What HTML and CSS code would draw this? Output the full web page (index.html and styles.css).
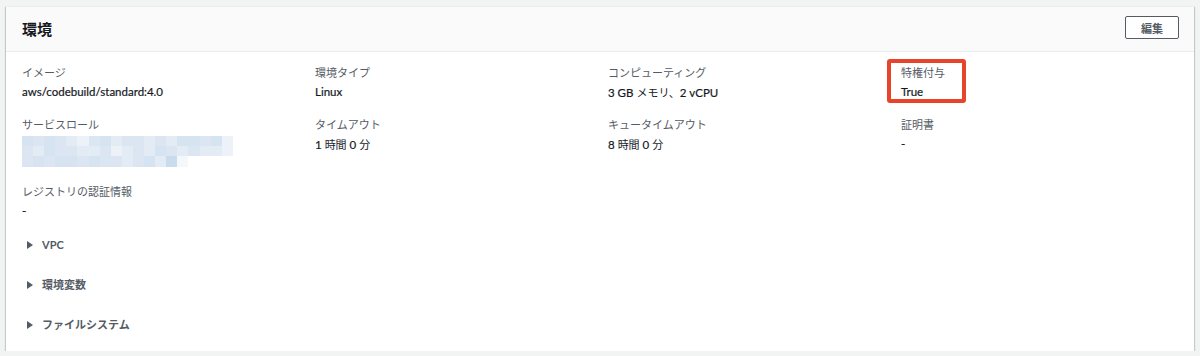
FILE: index.html
```html
<!DOCTYPE html>
<html lang="ja">
<head>
<meta charset="utf-8">
<link rel="stylesheet" href="styles.css">
</head>
<body>
<div class="card">
  <div class="card-header">
    <h2 class="title">環境</h2>
    <button class="btn">編集</button>
  </div>
  <div class="card-body">
    <div class="grid">
      <div class="item"><div class="label">イメージ</div><div class="value">aws/codebuild/standard:4.0</div></div>
      <div class="item"><div class="label">環境タイプ</div><div class="value">Linux</div></div>
      <div class="item"><div class="label">コンピューティング</div><div class="value">3 GB <span class="ja">メモリ、</span>2 vCPU</div></div>
      <div class="item"><div class="label">特権付与</div><div class="value">True</div><div class="highlight"></div></div>

      <div class="item"><div class="label">サービスロール</div>
        <div class="mosaic">
          <div class="mrow"><span class="a"></span><span class="b"></span><span class="a"></span><span class="b"></span><span class="c"></span><span class="d"></span><span class="b"></span><span class="a"></span><span class="c"></span><span class="b"></span><span class="b"></span><span class="c"></span><span class="b"></span><span class="c"></span><span class="a"></span><span class="a"></span><span class="b"></span><span class="a"></span><span class="d"></span></div>
          <div class="mrow"><span class="b"></span><span class="c"></span><span class="a"></span><span class="b"></span><span class="b"></span><span class="c"></span><span class="c"></span><span class="b"></span><span class="d"></span><span class="c"></span><span class="b"></span><span class="c"></span><span class="a"></span><span class="b"></span><span class="c"></span><span class="b"></span><span class="c"></span><span class="c"></span><span class="d"></span></div>
          <div class="mrow tall"><span class="b"></span><span class="a"></span><span class="b"></span><span class="a"></span><span class="a"></span><span class="b"></span><span class="a"></span><span class="b"></span><span class="b"></span><span class="c"></span><span class="b"></span><span class="a"></span><span class="c"></span><span class="x"></span><span class="e"></span></div>
        </div>
      </div>
      <div class="item"><div class="label">タイムアウト</div><div class="value">1 <span class="ja">時間</span> 0 <span class="ja">分</span></div></div>
      <div class="item"><div class="label">キュータイムアウト</div><div class="value">8 <span class="ja">時間</span> 0 <span class="ja">分</span></div></div>
      <div class="item"><div class="label">証明書</div><div class="value">-</div></div>

      <div class="item"><div class="label">レジストリの認証情報</div><div class="value">-</div></div>
    </div>
    <div class="expanders">
      <div class="expander"><span class="caret"></span><span class="exp-label">VPC</span></div>
      <div class="expander"><span class="caret"></span><span class="exp-label">環境変数</span></div>
      <div class="expander"><span class="caret"></span><span class="exp-label">ファイルシステム</span></div>
    </div>
  </div>
</div>
</body>
</html>
```

FILE: styles.css
```css
* { box-sizing: border-box; }
html, body { margin: 0; padding: 0; }
body {
  background: #f2f3f3;
  font-family: Lato, "Noto Sans CJK JP", sans-serif;
  font-size: 12px;
  color: #16191f;
  padding: 6px 6px 0 6px;
}
.card {
  background: #fff;
  height: 345px;
  box-shadow: 0 1px 1px 0 rgba(0,28,36,.3), 1px 1px 1px 0 rgba(0,28,36,.15), -1px 1px 1px 0 rgba(0,28,36,.15);
  border-top: 1px solid #eaeded;
}
.card-header {
  height: 45px;
  background: #fafafa;
  border-bottom: 1px solid #eaeded;
  display: flex;
  align-items: center;
  justify-content: space-between;
  padding: 0 15px 0 16px;
}
.title {
  margin: 0;
  font-family: "Noto Sans CJK JP", sans-serif;
  font-size: 15px;
  font-weight: 700;
  color: #16191f;
  line-height: 20px;
}
.btn {
  width: 54px;
  height: 23px;
  margin-top: -3px;
  border: 1px solid #545b64;
  border-radius: 2px;
  background: #fff;
  color: #545b64;
  font-family: "Noto Sans CJK JP", sans-serif;
  font-weight: 700;
  font-size: 11px;
  padding: 0;
}
.card-body {
  padding: 12px 16px 0 16px;
}
.grid {
  display: grid;
  grid-template-columns: repeat(4, 293px);
  row-gap: 16px;
}
.item { position: relative; }
.label {
  font-family: "Noto Sans CJK JP", sans-serif;
  font-size: 11px;
  color: #545b64;
  line-height: 16px;
  height: 16px;
}
.value {
  margin-top: 4px;
  line-height: 16px;
  height: 16px;
  font-size: 11.5px;
  color: #16191f;
  -webkit-text-stroke: 0.2px #16191f;
}
.ja {
  font-family: "Noto Sans CJK JP", sans-serif;
  font-size: 11px;
  -webkit-text-stroke: 0;
}
.highlight {
  position: absolute;
  left: -14px;
  top: -5px;
  width: 79px;
  height: 44px;
  border: 4px solid #e8432b;
  border-radius: 3px;
}
.mosaic {
  margin-top: 4px;
  width: 211px;
}
.mrow { display: flex; height: 10px; }
.mrow.tall { height: 11px; }
.mrow span { width: 11.1px; height: 100%; flex: none; }
.mrow .a { background: #d6e4f1; }
.mrow .b { background: #dbe6f2; }
.mrow .c { background: #e3ebf5; }
.mrow .d { background: #edf2f8; }
.mrow .e { background: #f5f8fb; }
.mrow .x { background: #c9dcee; }
.expanders { margin-top: 6px; }
.expander {
  height: 40px;
  display: flex;
  align-items: center;
  padding-left: 5px;
}
.caret {
  width: 0; height: 0;
  border-top: 4px solid transparent;
  border-bottom: 4px solid transparent;
  border-left: 6px solid #545b64;
  margin-right: 9px;
}
.exp-label {
  font-family: Lato, "Noto Sans CJK JP", sans-serif;
  font-size: 11px;
  font-weight: 700;
  color: #545b64;
  line-height: 16px;
}
```
